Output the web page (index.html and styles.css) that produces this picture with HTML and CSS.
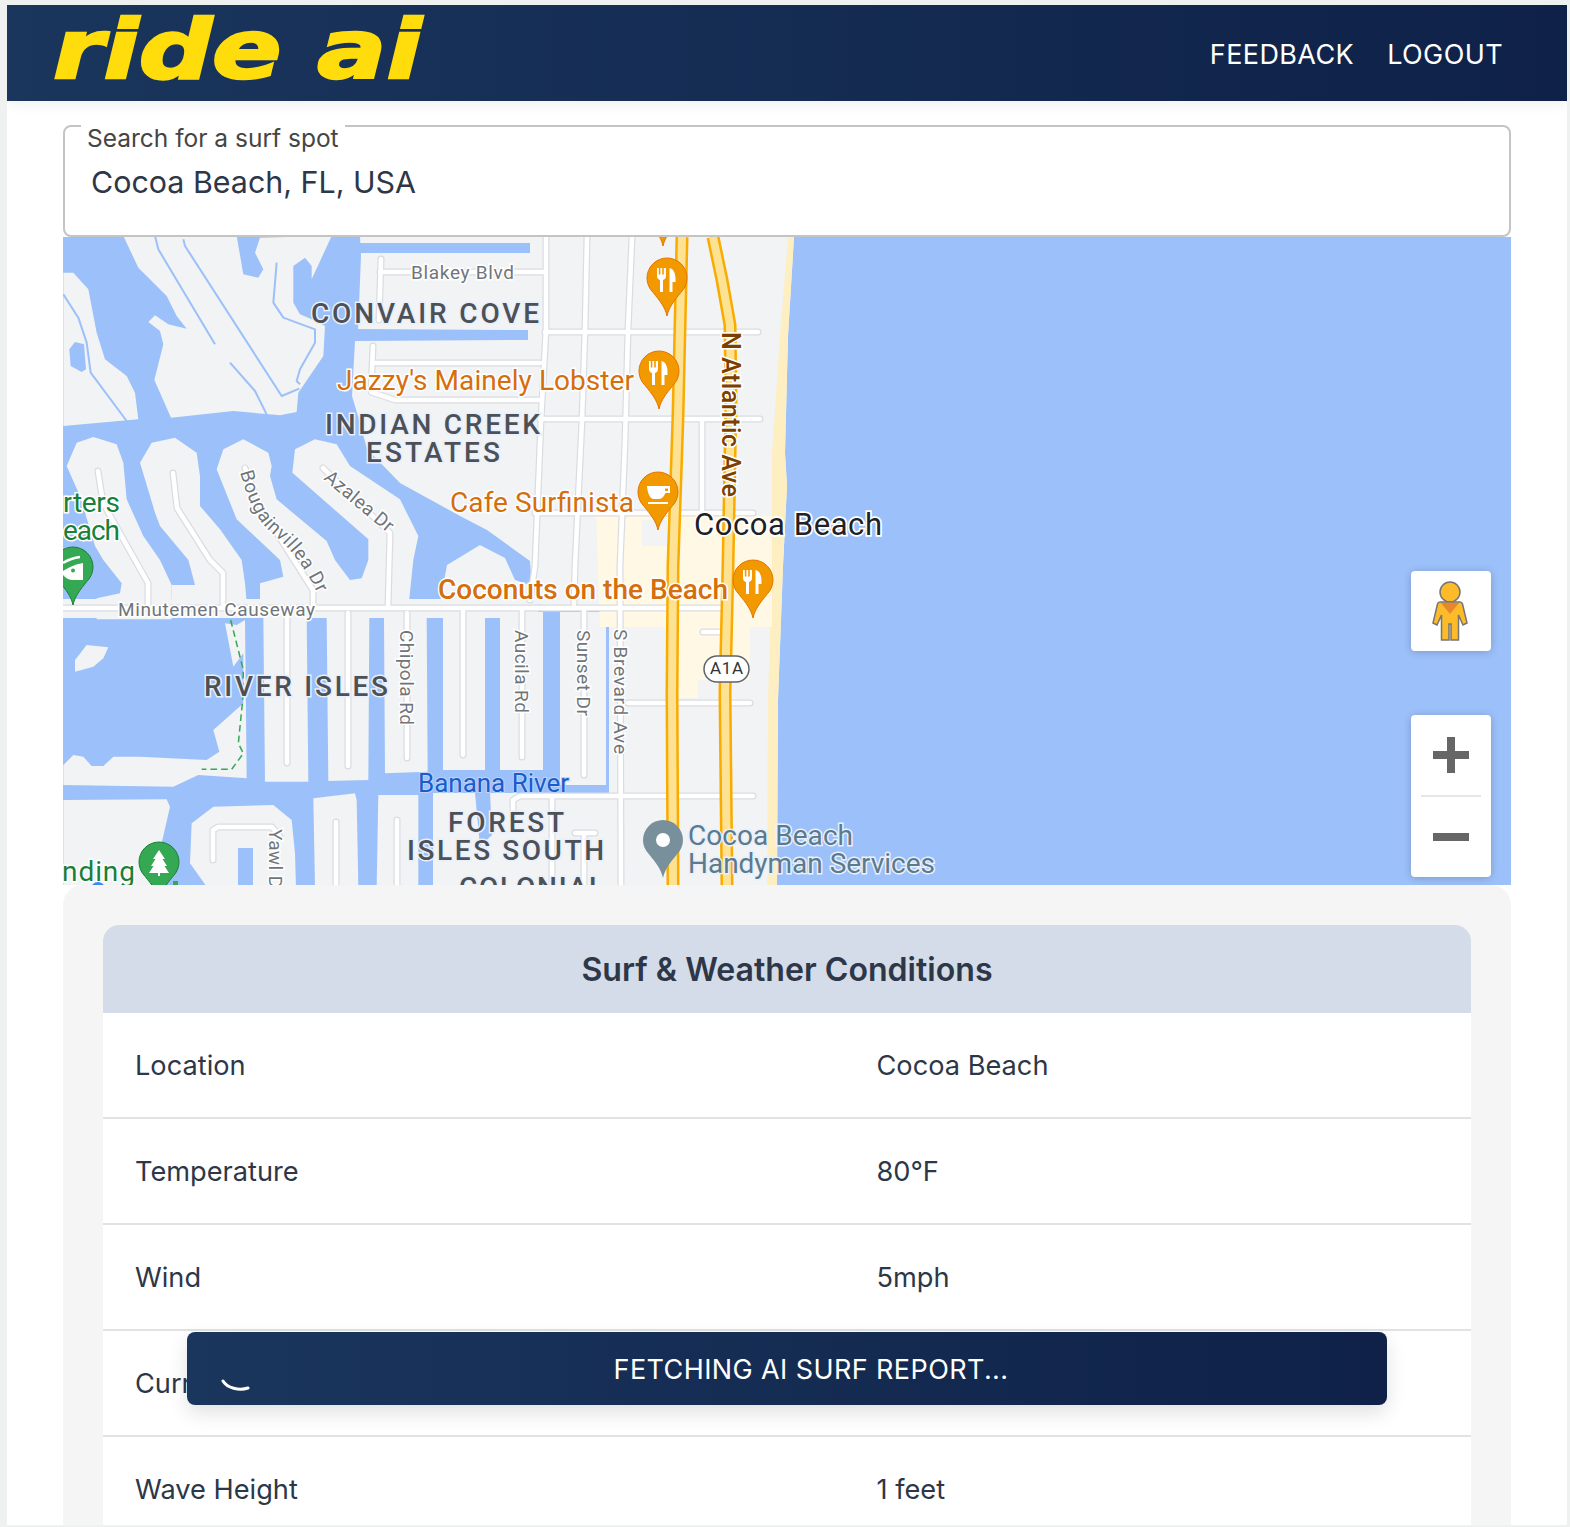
FILE: index.html
```html
<!DOCTYPE html>
<html lang="en">
<head>
<meta charset="utf-8">
<title>ride ai</title>
<link rel="stylesheet" href="styles.css">
</head>
<body>
<div class="frame">
  <header class="topbar">
    <div class="logo"><span class="logo-text">ride ai</span></div>
    <nav class="nav"><a>FEEDBACK</a><a>LOGOUT</a></nav>
  </header>
  <main class="content">
    <fieldset class="search">
      <legend><span class="legend-text">Search for a surf spot</span></legend>
      <div class="search-value">Cocoa Beach, FL, USA</div>
    </fieldset>
    <section class="map">
      <svg class="map-svg" viewBox="63 237 1448 648" width="1448" height="648" xmlns="http://www.w3.org/2000/svg">
        <defs>
          <path id="pin" d="M0 38C-2 29-7 23-14 14.300A20 20 0 1 1 14 14.300C7 23 2 29 0 38Z"/>
          <g id="food" fill="#fff">
            <path d="M-10-10h1.800v6.500h1.600V-10h1.800v6.500h1.600V-10H-1v8c0 2.500-1.500 3.500-3 4V14h-3V2c-1.500-.5-3-1.500-3-4Z"/>
            <path d="M2.500 14V-10c4 1 6 5 6 11v3H5.500V14Z"/>
          </g>
          <g id="roads" fill="none" stroke-linecap="round" stroke-linejoin="round">
            <path d="M546 237L546 330 541 420 535 566 530 600"/>
            <path d="M587 237L585 330 582 420 575 566 574 604"/>
            <path d="M632 237L628 330 625 442 620 566 621 885"/>
            <path d="M545 332H758"/>
            <path d="M540 419H760"/>
            <path d="M535 513H753"/>
            <path d="M380 272H545"/>
            <path d="M381 259L379 320"/>
            <path d="M373 346L371 392 395 400H540"/>
            <path d="M375 363H540"/>
            <path d="M63 608H720"/>
            <path d="M628 703H750"/>
            <path d="M513 815V800L520 796H753"/>
            <path d="M703 632H720"/>
            <path d="M702 421V510"/>
            <path d="M98 471L103 503 135 560 148 583V607"/>
            <path d="M173 473L177 508 210 560 223 573V607"/>
            <path d="M245 468L262 510 313 590V607"/>
            <path d="M323 468L390 533 388 607"/>
            <path d="M287 613V763"/>
            <path d="M348 613V766"/>
            <path d="M407 613V758"/>
            <path d="M463 610V755"/>
            <path d="M522 610V757"/>
            <path d="M584 610V775"/>
            <path d="M213 860V830L218 827H272L280 837"/>
            <path d="M336 822V885"/>
            <path d="M397 820V885"/>
            <path d="M552 796V885"/>
            <path d="M575 833H595"/>
            <path d="M584 833V885"/>
          </g>
          <path id="bougain" d="M240 472C250 508 260 524 274 535S306 566 322 604"/>
        </defs>

        <rect class="water" x="63" y="237" width="1448" height="648"/>

        <g class="land">
          <polygon points="360,237 794,237 788,336 785,453 787,486 783,566 778,700 777,885 433,885 433,793 609,793 609,612 533,604 530,561 487,530 460,516 400,483 367,449 358,416 352,396 355,341 358,330 361,256"/>
          <polygon points="440,602 447,565 480,545 505,558 515,580 530,585 535,604"/>
          <rect x="63" y="599" width="475" height="19"/>
          <rect x="500" y="612" width="43" height="158"/>
          <rect x="560" y="612" width="46" height="173"/>
          <rect x="443" y="612" width="42" height="158"/>
          <g transform="translate(60 236) scale(.33333)">
            <polygon points="10,110 40,110 85,160 110,290 135,370 200,420 225,470 235,550 10,570"/>
            <polygon points="190,0 235,95 320,180 350,240 380,278 325,265 285,238 265,258 300,285 310,325 283,432 333,545 520,525 660,538 710,528 715,470 790,360 795,270 755,250 720,235 700,200 700,90 735,65 755,90 755,130 815,0 600,5 585,50 610,100 595,125 550,115 530,0"/>
            <polygon points="20,690 50,620 100,603 170,625 190,680 200,790 250,900 300,972 335,1047 335,1150 110,1150 110,1087 180,1072 185,1042 130,972 105,930 60,780"/>
            <polygon points="240,680 275,620 345,605 410,650 420,720 420,810 480,880 545,972 555,1042 560,1097 335,1097 335,1047 405,1047 385,972 300,870 285,830"/>
            <polygon points="470,700 490,640 550,610 625,650 635,690 630,720 650,790 800,915 825,972 870,1032 905,1027 925,972 925,910 697,710 705,640 765,610 830,625 870,690 1020,790 1075,900 1060,972 1047,1097 600,1097 600,1042 670,1022 660,972 530,850"/>
          </g>
          <g transform="translate(60 560) scale(.33333)">
            <polygon points="495,190 530,195 555,180 560,655 415,645 340,680 10,675 10,615 40,585 70,590 95,618 130,618 160,590 240,590 440,600 478,575 460,510 550,430 550,280 520,320"/>
            <polygon points="45,300 80,255 145,262 130,295 100,320 45,335"/>
            <polygon points="610,170 740,170 745,665 615,665"/>
            <polygon points="800,170 928,170 925,660 805,663"/>
            <polygon points="972,170 1100,170 1103,635 975,640"/>
            <polygon points="10,720 320,718 330,740 305,850 300,980 10,980"/>
            <polygon points="395,790 460,740 640,735 695,780 705,880 708,980 440,980 390,910"/>
            <polygon points="760,715 885,700 890,720 895,980 765,980"/>
            <polygon points="955,705 1075,705 1075,980 950,980"/>
          </g>
        </g>

        <g class="water">
          <rect x="360" y="243" width="170" height="10"/>
          <polygon points="355,329 528,330 528,340 355,341"/>
          <polygon points="475,793 490,793 492,835 480,846"/>
          <rect x="238" y="848" width="15" height="37"/>
        </g>
        <g class="canal" transform="translate(60 236) scale(.33333)">
          <path d="M10 175L55 245 80 320 92 410 200 555"/>
          <path d="M285 0L295 40 465 325"/>
          <path d="M510 380L585 465 620 535"/>
          <path d="M370 10L375 30 665 480 718 458"/>
          <path d="M650 80L640 200 670 245 765 280 765 320 720 400 710 435 720 445"/>
        </g>
        <polygon class="water" transform="translate(60 236) scale(.33333)" points="28,340 45,318 72,325 78,400 65,408 32,390"/>

        <polygon class="beach" points="788,237 794,237 788,336 785,453 787,486 783,566 778,700 777,885 767,885 768,700 772,566 772,453 780,336"/>
        <g class="cream">
          <polygon points="596,516 772,516 772,627 600,627"/>
          <polygon points="677,627 750,627 750,680 698,680 698,698 677,698"/>
        </g>
        <rect class="land" x="642" y="520" width="25" height="26"/>

        <use href="#roads" class="road-case"/>
        <use href="#roads" class="road-fill"/>

        <path class="trail" transform="translate(60 560) scale(.33333)" d="M512 180L550 330 548 420 535 550 550 580 515 628H425"/>

        <path class="hw-edge" d="M682 237L678 416 673 566 672 693 673 885"/>
        <path class="hw-core" d="M682 237L678 416 673 566 672 693 673 885"/>
        <path class="hw-edge" d="M713 237L722 280 730 325 731 400 728 566 725 693 727 885"/>
        <path class="hw-core" d="M713 237L722 280 730 325 731 400 728 566 725 693 727 885"/>

        <g class="shield">
          <rect x="704" y="656" width="45" height="26" rx="13"/>
          <text x="726.500" y="674" text-anchor="middle" textLength="33">A1A</text>
        </g>

        <g class="road-label">
          <text x="411" y="279" textLength="103">Blakey Blvd</text>
          <text x="118" y="616" textLength="197">Minutemen Causeway</text>
          <text><textPath href="#bougain" textLength="146">Bougainvillea Dr</textPath></text>
          <text transform="translate(323 479) rotate(40)" textLength="84">Azalea Dr</text>
          <text transform="translate(400 630) rotate(90)" textLength="95">Chipola Rd</text>
          <text transform="translate(515 630) rotate(90)" textLength="83">Aucila Rd</text>
          <text transform="translate(577 630) rotate(90)" textLength="86">Sunset Dr</text>
          <text transform="translate(614 629) rotate(90)" textLength="125">S Brevard Ave</text>
          <text transform="translate(269 829) rotate(90)" textLength="66">Yawl Dr</text>
        </g>

        <g class="area-label">
          <text x="311" y="323" textLength="230">CONVAIR COVE</text>
          <text x="325" y="434" textLength="217">INDIAN CREEK</text>
          <text x="366" y="462" textLength="136">ESTATES</text>
          <text x="204" y="696" textLength="186">RIVER ISLES</text>
          <text x="448" y="832" textLength="118">FOREST</text>
          <text x="407" y="860" textLength="199">ISLES SOUTH</text>
          <text x="459" y="897" textLength="147">COLONIAL</text>
        </g>

        <g class="poi-orange">
          <text x="337" y="390" textLength="297">Jazzy's Mainely Lobster</text>
          <text x="450" y="512" textLength="184">Cafe Surfinista</text>
          <text class="strong" x="438" y="599" textLength="290">Coconuts on the Beach</text>
        </g>
        <g class="poi-green">
          <text x="63" y="512" textLength="57">rters</text>
          <text x="63" y="540" textLength="57">each</text>
          <text x="62" y="881" textLength="73">nding</text>
        </g>
        <text class="city" x="694" y="535" textLength="188">Cocoa Beach</text>
        <text class="hwy-label" transform="translate(722 332) rotate(90)" textLength="165">N Atlantic Ave</text>
        <text class="water-label" x="418" y="792" textLength="151">Banana River</text>
        <g class="poi-slate">
          <text x="688" y="845" textLength="165">Cocoa Beach</text>
          <text x="688" y="873" textLength="247">Handyman Services</text>
        </g>

        <g class="pin-orange">
          <use href="#pin" x="663" y="208"/>
          <use href="#pin" x="667" y="278"/>
          <use href="#pin" x="659" y="371"/>
          <use href="#pin" x="658" y="492"/>
          <use href="#pin" x="753" y="580"/>
        </g>
        <use href="#food" x="667" y="278"/>
        <use href="#food" x="659" y="371"/>
        <use href="#food" x="753" y="580"/>
        <g transform="translate(658 492)" fill="#fff">
          <path fill-rule="evenodd" d="M-11-6H12V1H7.500C6 4 4 7 1 7H-4C-8 7-10.500 1-11-6ZM7-3.500V-1H10V-3.500Z"/>
          <rect x="-10" y="10" width="20" height="2"/>
        </g>

        <g class="pin-green">
          <use href="#pin" x="73" y="567"/>
          <use href="#pin" x="159" y="862"/>
        </g>
        <path fill="#fff" d="M63 571Q72 565 83 563V580H73Q67 580 63 575Z"/>
        <path fill="none" stroke="#fff" stroke-width="2.500" d="M63 563Q71 558 80 557"/>
        <circle cx="73" cy="570.500" r="2" fill="#34a853"/>
        <path fill="#fff" d="M159 850L165 859H162.500L167 866H164.500L169 873H160V876H158V873H149L153.500 866H151L155.500 859H153Z"/>
        <rect x="173" y="881" width="5" height="4" fill="#34a853"/>
        <circle cx="98" cy="889" r="7" fill="#4285f4"/>

        <use href="#pin" class="pin-slate" x="663" y="840"/>
        <circle cx="663" cy="840" r="7" fill="#fff"/>
      </svg>

      <button class="map-ctl pegman" aria-label="Street view">
        <svg viewBox="0 0 80 80" width="80" height="80" xmlns="http://www.w3.org/2000/svg">
          <circle cx="39" cy="21" r="10" fill="#fdbb2a" stroke="#757575" stroke-width="1.500"/>
          <path fill="#fdbb2a" stroke="#757575" stroke-width="1.500" d="M29 31H49Q51 31 51.500 33L56 52 52 54 47.500 44V69H40V53H38V69H30.500V44L26 54 22 52 26.500 33Q27 31 29 31Z"/>
          <path fill="#e8862e" d="M30 32H48L39 43Z"/>
        </svg>
      </button>
      <div class="map-ctl zoom">
        <button class="zoom-btn" aria-label="Zoom in"><span class="bar"></span><span class="bar bar-v"></span></button>
        <div class="zoom-sep"></div>
        <button class="zoom-btn" aria-label="Zoom out"><span class="bar"></span></button>
      </div>
    </section>
    <section class="panel">
      <div class="card">
        <h2 class="card-title">Surf &amp; Weather Conditions</h2>
        <div class="row"><span>Location</span><span>Cocoa Beach</span></div>
        <div class="row"><span>Temperature</span><span>80°F</span></div>
        <div class="row"><span>Wind</span><span>5mph</span></div>
        <div class="row"><span>Current</span><span>Calm</span></div>
        <div class="row"><span>Wave Height</span><span>1 feet</span></div>
      </div>
    </section>
  </main>
  <button class="fetching">
    <svg class="spinner" viewBox="0 0 30 14" width="30" height="14" xmlns="http://www.w3.org/2000/svg"><path d="M2 2C6 9 18 12 27 9" fill="none" stroke="#fff" stroke-width="3" stroke-linecap="round"/></svg>
    <span>FETCHING AI SURF REPORT...</span>
  </button>
</div>
</body>
</html>
```
FILE: styles.css
```css
* { box-sizing: border-box; }
html, body { margin: 0; padding: 0; height: 1527px; overflow: hidden; }
body { background: #eff1f1; font-family: Inter, "Liberation Sans", sans-serif; color: #2d3748; }
.frame { position: relative; margin: 5px 3px 0 7px; height: 1520px; background: #fff; overflow: hidden; }

.topbar {
  height: 96px;
  display: flex; align-items: center; justify-content: space-between;
  padding: 4px 64px 0 48px;
  background: linear-gradient(90deg, #1a365d, #0f2148);
  box-shadow: 0 4px 12px rgba(0,0,0,.06);
  position: relative;
}
.logo { width: 400px; height: 96px; margin-top: -4px; }
.logo-text {
  display: inline-block;
  font: italic 700 82px/96px "DejaVu Sans", sans-serif;
  color: #ffdd0d;
  -webkit-text-stroke: 2.500px #ffdd0d;
  transform-origin: 0 0;
  transform: translate(-2px, -3px) scaleX(1.25);
  white-space: pre;
}
.nav { display: flex; gap: 33px; }
.nav a { color: #fff; font-size: 27px; line-height: 32px; letter-spacing: .4px; }

.content { padding: 24px 56px 0; }
.search {
  margin: 0; padding: 0 16px;
  height: 112px;
  border: 2px solid #c4c4c4; border-radius: 8px;
  display: block;
}
.search legend { display: block; padding: 0 6px; height: 2px; line-height: 0; font-size: 24.500px; color: #454545; }
.legend-text { position: relative; top: 13px; }
.search-value { margin: 35px 0 0 10px; font-size: 30.400px; line-height: 40px; color: #2d3748; }

.map { position: relative; height: 648px; margin-top: 0; background: #9cc0f9; overflow: hidden; }
.map-svg { display: block; font-family: Roboto, "Liberation Sans", sans-serif; }
.water { fill: #9cc0f9; }
.land { fill: #f1f3f4; }
.canal { fill: none; stroke: #9cc0f9; stroke-width: 6; stroke-linejoin: round; }
.beach { fill: #feefc3; }
.cream { fill: #fff8e4; }
.road-case { stroke: #dadce0; stroke-width: 7; }
.road-fill { stroke: #fff; stroke-width: 4.600; }
.trail { fill: none; stroke: #34a853; stroke-width: 4.500; stroke-dasharray: 20 12; }
.hw-edge { fill: none; stroke: #f9ab00; stroke-width: 13; }
.hw-core { fill: none; stroke: #fde293; stroke-width: 8; }

.shield rect { fill: #fff; stroke: #5f6368; stroke-width: 1.500; }
.shield text { font-size: 17px; fill: #333; }

.road-label text { font-size: 19px; fill: #70757a; stroke: #fff; stroke-width: 3px; paint-order: stroke; }
.area-label text { font-size: 28px; font-weight: 500; letter-spacing: 2px; fill: #4d5156; stroke: #e8f0fe; stroke-width: 3px; paint-order: stroke; }
.poi-orange text { font-size: 28px; fill: #d56e0c; stroke: #fff; stroke-width: 3px; paint-order: stroke; }
.poi-orange .strong { font-weight: 500; fill: #d56e0c; }
.poi-green text { font-size: 28px; fill: #188038; stroke: #fff; stroke-width: 3px; paint-order: stroke; }
.poi-slate text { font-size: 28px; fill: #5b7a8c; stroke: #e8f0fe; stroke-width: 3px; paint-order: stroke; }
.city { font-size: 31px; fill: #202124; stroke: #fff; stroke-width: 3.500px; paint-order: stroke; }
.hwy-label { font-size: 25px; font-weight: 500; fill: #7b3f00; stroke: #fff; stroke-width: 3px; paint-order: stroke; }
.water-label { font-size: 26px; fill: #1a5cc8; stroke: #bcd4fb; stroke-width: 2px; paint-order: stroke; }

.pin-orange { fill: #f29900; stroke: #e37400; stroke-width: 1; }
.pin-green { fill: #34a853; stroke: #188038; stroke-width: 1; }
.pin-slate { fill: #78909c; }

.map-ctl { position: absolute; background: #fff; border: 0; padding: 0; border-radius: 4px; box-shadow: 0 1px 8px rgba(0,0,0,.2); }
.pegman { top: 334px; right: 20px; width: 80px; height: 80px; display: block; }
.pegman svg { display: block; }
.zoom { top: 478px; right: 20px; width: 80px; height: 162px; display: flex; flex-direction: column; align-items: center; }
.zoom-btn { position: relative; width: 80px; height: 80px; background: none; border: 0; padding: 0; }
.zoom-sep { width: 60px; height: 2px; background: #e6e6e6; }
.bar { position: absolute; left: 22px; top: 36px; width: 36px; height: 8px; background: #666; }
.bar-v { left: 36px; top: 22px; width: 8px; height: 36px; }

.panel { margin-top: 0; padding: 40px 40px 0; background: #f5f5f5; border-radius: 20px 20px 0 0; position: relative; }
.card { background: #fff; border-radius: 16px 16px 0 0; overflow: hidden; }
.card-title { margin: 0; height: 88px; padding-top: 1px; display: flex; align-items: center; justify-content: center; background: #d3dce8; font-size: 32.100px; font-weight: 600; color: #2d3748; }
.row { height: 106px; display: grid; grid-template-columns: 741.500px 1fr; align-items: center; padding: 0 32px; border-bottom: 2px solid #e2e2e2; font-size: 27.200px; color: #2d3748; }

.fetching {
  position: absolute; left: 180px; top: 1327px;
  width: 1200px; height: 73px;
  display: flex; align-items: center; justify-content: center;
  padding: 2px 0 0 48px; border: 0; border-radius: 8px;
  background: linear-gradient(90deg, #1a365d, #0f2148);
  color: #fff; font-family: inherit; font-size: 27px; letter-spacing: .4px;
  box-shadow: 0 8px 20px rgba(0,0,0,.12);
}
.spinner { position: absolute; left: 34px; top: 47px; }
```
